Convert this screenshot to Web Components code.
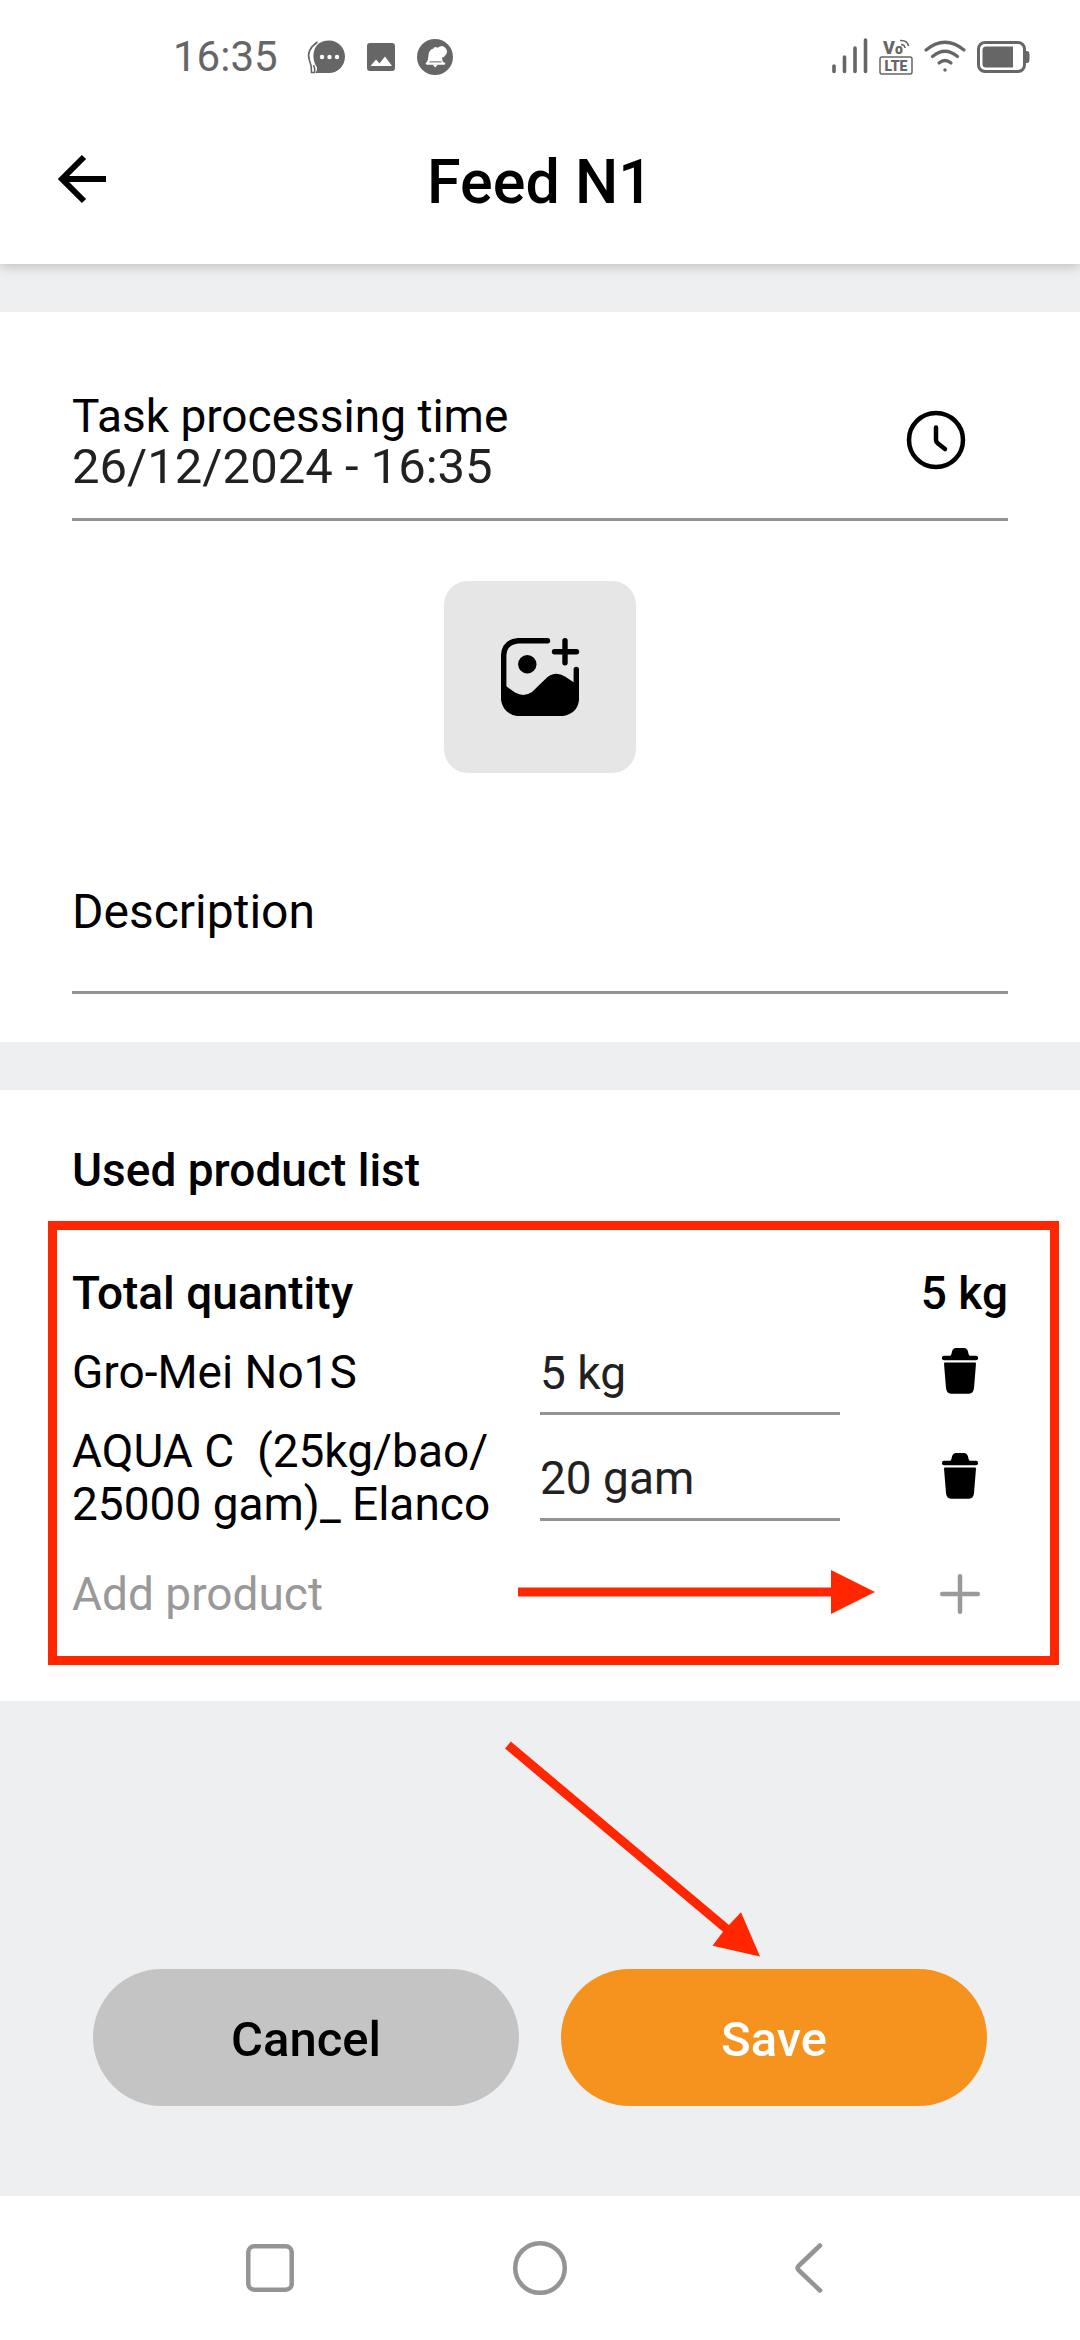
<!DOCTYPE html>
<html lang="en">
<head>
<meta charset="utf-8">
<meta name="viewport" content="width=device-width, initial-scale=1">
<title>Feed N1</title>
<style>
  html, body { margin: 0; min-height: 100vh; }
  body {
    --ink: #000; --input-ink: #212121; --muted: #999; --line: #939393;
    --page: #eeeff1; --accent: #f6921e; --mark: #ff2600;
    background: var(--page); color: var(--ink);
    font-family: Roboto, "Liberation Sans", sans-serif; font-size: 46px; line-height: 53px;
    display: flex; flex-direction: column;
  }
  feed-screen { flex: 1; }
</style>
</head>
<body>
<feed-screen></feed-screen>
<script>
const reset = `
  *, *::before { box-sizing: border-box; }
  svg { display: block; flex: none; overflow: visible; }
  button { margin: 0; padding: 0; border: 0; background: none; color: inherit; font: inherit; cursor: pointer;
           display: flex; align-items: center; justify-content: center; }
  input { margin: 0; padding: 0; border: 0; outline: 0; background: none; font: inherit; color: inherit;
          min-width: 0; width: 100%; border-radius: 0; }
`;
function define(name, markup, setup) {
  customElements.define(name, class extends HTMLElement {
    connectedCallback() {
      if (this.shadowRoot) return;
      const t = document.createElement('template');
      t.innerHTML = `<style>${reset}</style>` + markup;
      this.attachShadow({ mode: 'open' }).append(t.content.cloneNode(true));
      if (setup) setup(this, this.shadowRoot);
    }
  });
}

define('status-bar', `
  <style>
    :host { display: flex; align-items: center; justify-content: space-between; height: 98px;
            padding: 16px 50px 0 173px; background: #fff; color: #666; }
    div { display: flex; align-items: center; }
    .time { font-size: 42px; line-height: 50px; margin-right: 29px; }
    .left svg + svg { margin-left: 22px; }
    .right { gap: 11px; }
    text { font-family: Roboto, sans-serif; font-weight: 900; fill: currentColor; }
  </style>
  <div class="left">
    <span class="time">16:35</span>
    <svg width="38" height="34" viewBox="0 0 38 34" fill="currentColor" aria-hidden="true">
      <path d="M22 0.5C31 0.5 38 7.500 38 16.500S31 33 22 33H8.500Q11 29 9.500 26.500C4 18 5 .5 22 .5Z"/>
      <path d="M10.500 2Q-1 10 2.300 20Q5 26 4.500 32.500H7.500Q8.500 29 6.500 25" fill="none" stroke="currentColor" stroke-width="1.600"/>
      <g fill="#fff"><circle cx="15" cy="17" r="2.200"/><circle cx="22.500" cy="17" r="2.200"/><circle cx="30" cy="17" r="2.200"/></g>
    </svg>
    <svg width="28" height="28" viewBox="0 0 28 28" aria-hidden="true">
      <rect width="28" height="28" rx="3" fill="currentColor"/>
      <path d="M3.500 23L9 16.500L12.500 20.500L18 13.500L25 23Z" fill="#fff"/>
    </svg>
    <svg width="36" height="36" viewBox="0 0 36 36" aria-hidden="true">
      <circle cx="18" cy="18" r="18" fill="currentColor"/>
      <path d="M9 24.500Q11.500 21 11.500 16Q12 10.500 16.500 9.500Q17 7.500 19 8Q20 9 21 8.500Q25 5.500 28 8.500Q31.500 12 29 15.500Q27.500 18 25 18.500Q25 21.500 27 24.500Z" fill="#fff"/>
      <path d="M10 24.600H27" stroke="#fff" stroke-width="2.400" stroke-linecap="round"/>
      <path d="M15.500 25.500H21L18.200 28.500Z" fill="#fff"/>
      <path d="M12.500 22.900H24.500" stroke="#666" stroke-width="1"/>
    </svg>
  </div>
  <div class="right">
    <svg width="36" height="36" viewBox="0 0 36 36" stroke="currentColor" stroke-width="3.600" stroke-linecap="round" aria-hidden="true">
      <path d="M2 27V32.500M12.500 18V32.500M23 9V32.500M33.500 1V32.500"/>
    </svg>
    <svg width="34" height="36" viewBox="0 0 34 36" aria-label="VoLTE">
      <text x="4" y="15" font-size="18">V</text>
      <text x="16" y="15" font-size="14">o</text>
      <path d="M22 5.500Q25.500 5.500 26 9M21 1.500Q28.500 1 29.500 7" fill="none" stroke="currentColor" stroke-width="1.600"/>
      <rect x="1" y="18" width="32" height="17" rx="2" fill="none" stroke="currentColor" stroke-width="1.500"/>
      <text x="17" y="31.500" font-size="14" text-anchor="middle">LTE</text>
    </svg>
    <svg width="42" height="34" viewBox="0 0 42 34" fill="none" stroke="currentColor" stroke-width="3.200" stroke-linecap="round" aria-hidden="true">
      <path d="M2 10Q21 -5.500 40 10M8.500 16.500Q21 6 33.500 16.500M15 23Q21 18 27 23"/>
      <circle cx="21" cy="30" r="1.700" fill="currentColor" stroke="none"/>
    </svg>
    <svg width="53" height="32" viewBox="0 0 53 32" aria-hidden="true">
      <rect x="1.500" y="1.500" width="46" height="29" rx="6.500" fill="none" stroke="currentColor" stroke-width="3"/>
      <path d="M9 5.500H36V26.500H9Q5.500 26.500 5.500 23V9Q5.500 5.500 9 5.500Z" fill="currentColor"/>
      <path d="M49 10H50.500Q52.500 10.500 52.500 13V19Q52.500 21.500 50.500 22H49Z" fill="currentColor"/>
    </svg>
  </div>
`);

define('app-bar', `
  <style>
    :host { display: grid; grid-template-columns: 164px 1fr 164px; align-items: center; height: 166px;
            background: #fff; box-shadow: 0 2px 12px rgba(0, 0, 0, .22); clip-path: inset(0 0 -24px); position: relative; }
    button { height: 166px; }
    h1 { margin: 0; padding-top: 2px; font-size: 61px; line-height: 70px; font-weight: 500; text-align: center; }
  </style>
  <button type="button" aria-label="Back">
    <svg width="48" height="52" viewBox="0 0 48 52" fill="none" stroke="currentColor" stroke-width="6" aria-hidden="true">
      <path d="M48 24H5M26 2L4 24L26 46"/>
    </svg>
  </button>
  <h1><slot></slot></h1>
`);

define('section-card', `
  <style>
    :host { display: block; background: #fff; padding: 54px 72px 44px; }
  </style>
  <slot></slot>
`);

define('time-field', `
  <style>
    :host { display: flex; align-items: flex-start; padding-bottom: 23px; border-bottom: 3px solid var(--line); }
    .text { flex: 1; min-width: 0; }
    label { display: block; line-height: 45px; }
    input { display: block; height: 56px; font-size: 49px; line-height: 56px; color: var(--input-ink); }
    button { width: 144px; height: 92px; }
  </style>
  <div class="text"><label for="time"></label><input id="time" type="text"></div>
  <button type="button" aria-label="Choose time">
    <svg width="58" height="58" viewBox="0 0 58 58" fill="none" stroke="currentColor" stroke-width="4.500" stroke-linecap="round" stroke-linejoin="round" aria-hidden="true">
      <circle cx="29" cy="29" r="27"/><path d="M29 16.500V29Q29 31 31 32.500L38 38"/>
    </svg>
  </button>
`, (host, root) => {
  root.querySelector('label').textContent = host.getAttribute('label');
  root.querySelector('input').value = host.getAttribute('value');
});

define('photo-button', `
  <style>
    :host { display: flex; justify-content: center; padding: 60px 0 111px; }
    button { width: 192px; height: 192px; border-radius: 24px; background: #e6e6e6; }
  </style>
  <button type="button" aria-label="Add photo">
    <svg width="78" height="78" viewBox="0 0 78 78" aria-hidden="true">
      <path d="M2.700 50V17Q3.500 4 17 2.700H46.500M75.300 31.500V60" fill="none" stroke="currentColor" stroke-width="5.400" stroke-linecap="round"/>
      <path d="M0 46.500L5 48L14 54.500Q23 59.500 31 54L46 39.500Q54.500 32.500 64 38.500L73 44.500L78 45V62Q76.500 75.500 62 78H16Q2 75.500 0 62Z"/>
      <circle cx="26.300" cy="26.300" r="9.200"/>
      <path d="M53.500 13.700H75.500M64 2.700V24.700" stroke="currentColor" stroke-width="5.400" stroke-linecap="round"/>
    </svg>
  </button>
`);

define('text-field', `
  <style>
    :host { display: block; font-size: 48px; line-height: 56px; }
    label { display: block; }
    input { display: block; height: 54px; border-bottom: 3px solid var(--line); }
  </style>
  <label for="field"><slot></slot></label><input id="field" type="text">
`);

const columns = 'grid-template-columns: 1fr 300px 168px; align-items: center;';
define('product-row', `
  <style>
    :host { display: grid; ${columns} min-height: 105px; }
    label { white-space: pre-wrap; padding-right: 36px; }
    input { height: 85px; padding: 16px 0 13px; border-bottom: 3px solid var(--line); color: var(--input-ink); }
    button { width: 96px; height: 96px; justify-self: end; }
  </style>
  <label for="amount"><slot></slot></label>
  <input id="amount" type="text">
  <button type="button" aria-label="Remove product">
    <svg width="36" height="50" viewBox="0 0 36 50" fill="currentColor" aria-hidden="true">
      <path d="M8.500 8Q9.500 7 10 3.500Q11 0 14 0H22Q25 0 26 3.500Q26.500 7 27.500 8Z"/>
      <rect y="7.700" width="36" height="4.600" rx="2"/>
      <path d="M3 14.500H33Q34 14.500 34 15.500L32 40Q31.500 45.700 27 45.700H9Q4.500 45.700 4 40L2 15.500Q2 14.500 3 14.500Z"/>
    </svg>
  </button>
`, (host, root) => { root.querySelector('input').value = host.getAttribute('amount'); });

define('add-row', `
  <style>
    :host { display: grid; ${columns} min-height: 126px; color: var(--muted); position: relative; }
    button { grid-column: 3; width: 96px; height: 96px; justify-self: end; }
    .pointer { position: absolute; left: 446px; top: 39px; color: var(--mark); pointer-events: none; }
  </style>
  <span><slot></slot></span>
  <button type="button" aria-label="Add product">
    <svg width="40" height="40" viewBox="0 0 40 40" stroke="currentColor" stroke-width="4.500" stroke-linecap="round" aria-hidden="true">
      <path d="M2.200 20H37.800M20 2.200V37.800"/>
    </svg>
  </button>
  <svg class="pointer" width="357" height="44" viewBox="0 0 357 44" fill="currentColor" aria-hidden="true">
    <path d="M0 17.500H313V0L357 22L313 44V26.500H0Z"/>
  </svg>
`);

define('product-list', `
  <style>
    :host { display: block; }
    h2 { margin: 0 0 70px; font: inherit; font-weight: 500; }
    .list { position: relative; }
    .list::before { content: ""; position: absolute; inset: -46px -51px -8px -24px;
                    border: 9px solid var(--mark); pointer-events: none; }
    .total { display: flex; justify-content: space-between; font-weight: 500; }
  </style>
  <h2>Used product list</h2>
  <div class="list">
    <div class="total"><span>Total quantity</span><span>5 kg</span></div>
    <slot></slot>
  </div>
`);

define('form-actions', `
  <style>
    :host { display: flex; align-items: flex-end; gap: 42px; padding: 0 93px 90px; position: relative; }
    button { flex: 1; height: 137px; padding-top: 4px; border-radius: 69px; font-size: 49px; line-height: 56px; font-weight: 500; }
    .cancel { background: #c4c4c4; }
    .save { background: var(--accent); color: #fff; }
    .pointer { position: absolute; left: 505px; top: 40px; color: var(--mark); pointer-events: none; }
  </style>
  <button class="cancel" type="button">Cancel</button>
  <button class="save" type="submit">Save</button>
  <svg class="pointer" width="255" height="216" viewBox="0 0 255 216" fill="currentColor" aria-hidden="true">
    <path d="M0 7.500L5.800 .5L224 184L236 171.300L255 215.500L207.500 204.700L218 190.700Z"/>
  </svg>
`);

define('system-nav', `
  <style>
    :host { display: grid; grid-template-columns: repeat(3, 1fr); height: 144px; padding: 0 135px; background: #fff; color: #949494; }
    svg { fill: none; stroke: currentColor; stroke-width: 4.500; stroke-linecap: round; stroke-linejoin: round; }
  </style>
  <button type="button" aria-label="Recent apps"><svg width="48" height="48" viewBox="0 0 48 48"><rect x="2.300" y="2.300" width="43.400" height="43.400" rx="6"/></svg></button>
  <button type="button" aria-label="Home"><svg width="54" height="54" viewBox="0 0 54 54"><circle cx="27" cy="27" r="24.800"/></svg></button>
  <button type="button" aria-label="Back"><svg width="30" height="50" viewBox="0 0 30 50"><path d="M25 2.500L3.500 23Q1.500 25 3.500 27L25 47.500"/></svg></button>
`);

define('feed-screen', `
  <style>
    :host { display: flex; flex-direction: column; }
    main { flex: 1; display: flex; flex-direction: column; gap: 48px; padding-top: 48px; }
    .details { padding: 82px 72px 48px; }
    .end { flex: 1; display: flex; flex-direction: column; }
    form-actions { flex: 1; min-height: 495px; }
  </style>
  <status-bar></status-bar>
  <app-bar>Feed N1</app-bar>
  <main>
    <section-card class="details">
      <time-field label="Task processing time" value="26/12/2024 - 16:35"></time-field>
      <photo-button></photo-button>
      <text-field>Description</text-field>
    </section-card>
    <div class="end">
      <section-card>
        <product-list>
          <product-row amount="5 kg">Gro-Mei No1S</product-row>
          <product-row amount="20 gam">AQUA C&nbsp; (25kg/bao/<wbr>25000 gam)_ Elanco</product-row>
          <add-row>Add product</add-row>
        </product-list>
      </section-card>
      <form-actions></form-actions>
    </div>
  </main>
  <system-nav></system-nav>
`);
</script>
</body>
</html>
